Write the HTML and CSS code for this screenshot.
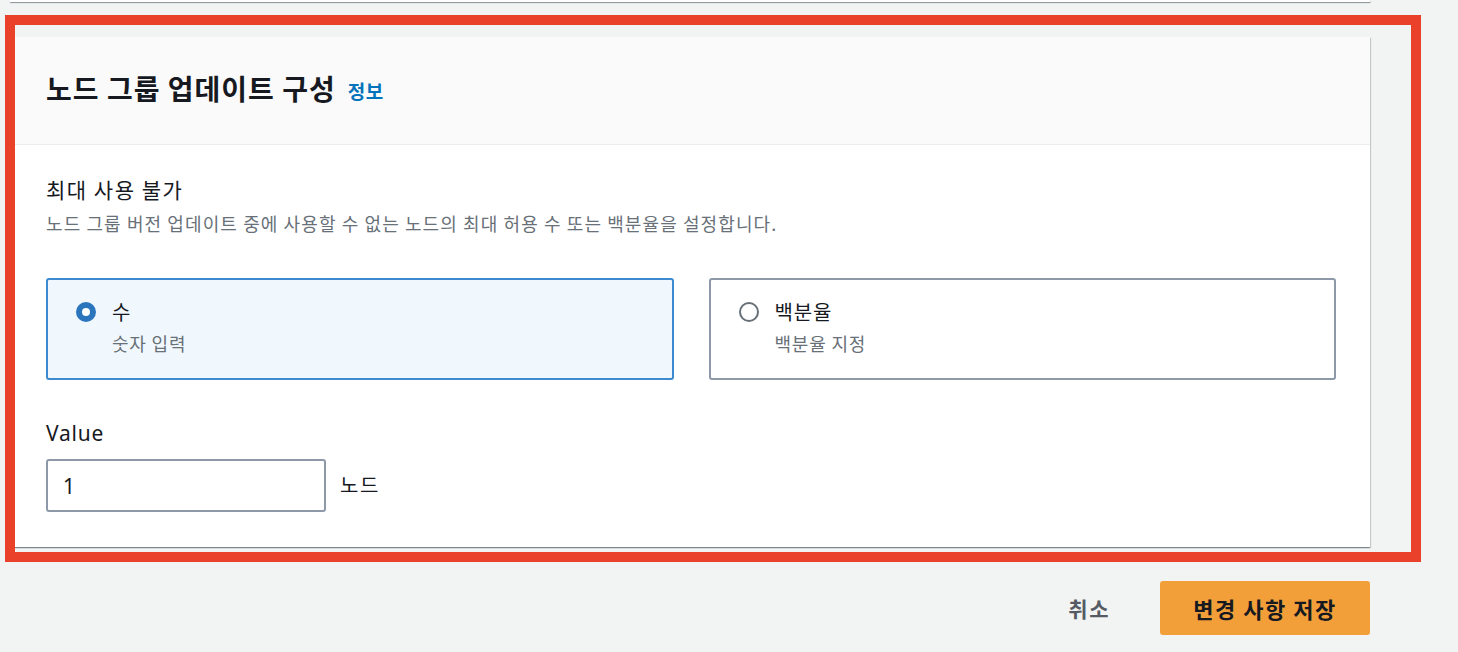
FILE: index.html
```html
<!DOCTYPE html>
<html>
<head>
<meta charset="utf-8">
<title>노드 그룹 업데이트 구성</title>
<link rel="stylesheet" href="styles.css">
</head>
<body>
<div class="page">
  <div class="prev-card"></div>

  <div class="card">
    <div class="card-header">
      <h2>노드 그룹 업데이트 구성</h2>
      <a class="info" href="#">정보</a>
    </div>
    <div class="card-body">
      <div class="field-label">최대 사용 불가</div>
      <div class="field-desc">노드 그룹 버전 업데이트 중에 사용할 수 없는 노드의 최대 허용 수 또는 백분율을 설정합니다.</div>

      <div class="tiles">
        <label class="tile selected">
          <span class="radio checked"></span>
          <span class="tile-text">
            <span class="tile-title">수</span>
            <span class="tile-sub">숫자 입력</span>
          </span>
        </label>
        <label class="tile">
          <span class="radio"></span>
          <span class="tile-text">
            <span class="tile-title">백분율</span>
            <span class="tile-sub">백분율 지정</span>
          </span>
        </label>
      </div>

      <div class="value-label">Value</div>
      <div class="value-row">
        <div class="input">1</div>
        <span class="unit">노드</span>
      </div>
    </div>
  </div>

  <div class="actions">
    <a class="btn-link" href="#">취소</a>
    <a class="btn-primary" href="#">변경 사항 저장</a>
  </div>

  <div class="highlight"></div>
</div>
</body>
</html>
```

FILE: styles.css
```css
body {
  margin: 0;
  background-color: #f2f3f3;
  font-family: "Noto Sans CJK KR", "Noto Sans", sans-serif;
  color: #16191f;
}

.page {
  position: relative;
  width: 1360px;
  padding-left: 10px;
}

.prev-card {
  height: 2px;
  background: #fff;
  box-shadow: 0 1px 1px 0 rgba(0,28,36,.35), 1px 1px 1px 0 rgba(0,28,36,.15);
}

.card {
  margin-top: 35px;
  background: #fff;
  box-shadow: 0 1px 1px 0 rgba(0,28,36,.3), 1px 1px 1px 0 rgba(0,28,36,.15), -1px 1px 1px 0 rgba(0,28,36,.15);
}

.card-header {
  box-sizing: border-box;
  height: 108px;
  display: flex;
  align-items: center;
  padding: 0 0 6px 36px;
  background: #fafafa;
  border-bottom: 1px solid #eaeded;
}

.card-header h2 {
  margin: 0;
  font-size: 28px;
  font-weight: 700;
  letter-spacing: 1px;
}

.info {
  margin-left: 12px;
  margin-top: 5px;
  font-size: 19px;
  font-weight: 700;
  letter-spacing: 0.5px;
  color: #0073bb;
  text-decoration: none;
}

.card-body {
  padding: 30px 34px 35px 36px;
}

.field-label {
  font-size: 21px;
  line-height: 28px;
  letter-spacing: 1.5px;
}

.field-desc {
  margin-top: 8px;
  font-size: 18px;
  line-height: 24px;
  color: #687078;
  letter-spacing: 1.1px;
}

.tiles {
  display: flex;
  gap: 35px;
  margin-top: 43px;
}

.tile {
  flex: 1;
  display: flex;
  align-items: flex-start;
  padding: 19px 26px 23px 28px;
  border: 2px solid #8d99a8;
  border-radius: 3px;
  background: #fff;
}

.tile.selected {
  border-color: #3d8ad0;
  background: #f1f8fd;
}

.radio {
  width: 16px;
  height: 16px;
  margin-top: 3px;
  border: 2px solid #687078;
  border-radius: 50%;
  background: #fff;
  flex: none;
}

.radio.checked {
  width: 8px;
  height: 8px;
  border: 6px solid #2b75bd;
}

.tile-text {
  display: flex;
  flex-direction: column;
  margin-left: 16px;
}

.tile-title {
  font-size: 20px;
  line-height: 26px;
  letter-spacing: 0.8px;
}

.tile-sub {
  margin-top: 6px;
  font-size: 18px;
  line-height: 24px;
  color: #687078;
  letter-spacing: 0.8px;
}

.value-label {
  margin-top: 39px;
  font-family: "Noto Sans", "Noto Sans CJK KR", sans-serif;
  font-size: 21px;
  line-height: 28px;
  letter-spacing: 0.8px;
}

.value-row {
  display: flex;
  align-items: center;
  margin-top: 12px;
}

.input {
  box-sizing: border-box;
  width: 280px;
  height: 53px;
  padding: 2px 0 0 15px;
  border: 2px solid #8d99a8;
  border-radius: 3px;
  font-family: "Noto Sans", "Noto Sans CJK KR", sans-serif;
  font-size: 21px;
  line-height: 47px;
  background: #fff;
}

.unit {
  margin-left: 14px;
  margin-top: -2px;
  font-size: 20px;
  line-height: 26px;
  letter-spacing: 1.5px;
}

.actions {
  display: flex;
  justify-content: flex-end;
  align-items: center;
  margin-top: 34px;
}

.btn-link {
  padding: 0 50px 0 20px;
  font-size: 21px;
  font-weight: 700;
  letter-spacing: 1.5px;
  color: #545b64;
  text-decoration: none;
}

.btn-primary {
  display: flex;
  align-items: center;
  justify-content: center;
  width: 210px;
  height: 54px;
  border-radius: 3px;
  background: #f29f3a;
  font-size: 22px;
  font-weight: 700;
  letter-spacing: 1.5px;
  color: #16191f;
  text-decoration: none;
}

/* red annotation frame drawn over the card */
.highlight {
  position: absolute;
  left: 5px;
  top: 15px;
  width: 1396px;
  height: 527px;
  border: 10px solid #e9412a;
  pointer-events: none;
}
```
